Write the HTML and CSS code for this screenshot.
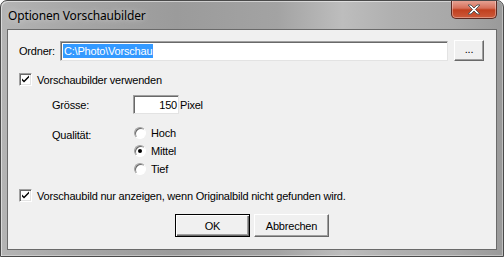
FILE: index.html
```html
<!DOCTYPE html>
<html lang="de">
<head>
<meta charset="utf-8">
<title>Optionen Vorschaubilder</title>
<link rel="stylesheet" href="styles.css">
</head>
<body>
<div class="window">
  <div class="titlebar">
    <span class="title">Optionen Vorschaubilder</span>
    <span class="close">
      <svg width="16" height="11" viewBox="0 0 16 11"><path d="M2 1h3l3 3 3-3h3l-4.5 4.5 4.5 4.5h-3l-3-3-3 3h-3l4.5-4.5z" fill="#fff" stroke="#5a5a5a" stroke-width="1"/></svg>
    </span>
  </div>
  <div class="client">
    <div class="row folder">
      <span class="label">Ordner:</span>
      <span class="field wide"><span class="sel">C:\Photo\Vorschau</span></span>
      <span class="btn small">...</span>
    </div>
    <div class="row check first">
      <span class="box"><svg width="9" height="9" viewBox="0 0 9 9"><path d="M1 3.5l2 2 5-5v2l-5 5-2-2z" fill="#000"/></svg></span>
      <span>Vorschaubilder verwenden</span>
    </div>
    <div class="row size">
      <span class="label indent">Grösse:</span>
      <span class="field num">150</span>
      <span class="unit">Pixel</span>
    </div>
    <div class="row quality">
      <span class="label indent">Qualität:</span>
      <div class="radios">
        <div class="radio"><span class="dot"></span><span>Hoch</span></div>
        <div class="radio on"><span class="dot"></span><span>Mittel</span></div>
        <div class="radio"><span class="dot"></span><span>Tief</span></div>
      </div>
    </div>
    <div class="row check second">
      <span class="box"><svg width="9" height="9" viewBox="0 0 9 9"><path d="M1 3.5l2 2 5-5v2l-5 5-2-2z" fill="#000"/></svg></span>
      <span>Vorschaubild nur anzeigen, wenn Originalbild nicht gefunden wird.</span>
    </div>
    <div class="row actions">
      <span class="btn default">OK</span>
      <span class="btn">Abbrechen</span>
    </div>
  </div>
</div>
</body>
</html>
```
FILE: styles.css
```css
* { box-sizing: border-box; }
html, body { margin: 0; padding: 0; background: #fff; }
.window {
  width: 504px;
  height: 257px;
  border: 1px solid #4a4a4a;
  border-radius: 7px 7px 0 0;
  background:
    linear-gradient(to right, #b4b4b4 0%, #a6a6a6 15%, #9b9b9b 35%, #a3a3a3 55%, #bdbdbd 68%, #b0b0b0 78%, #a8a8a8 90%, #9a9a9a 100%);
  display: flex;
  flex-direction: column;
  overflow: hidden;
  box-shadow: inset 1px 1px 0 rgba(255,255,255,0.5), inset -1px -1px 0 rgba(255,255,255,0.35);
}
.titlebar {
  height: 28px;
  display: flex;
  justify-content: space-between;
  align-items: flex-start;
  padding-left: 7px;
  padding-right: 6px;
}
.title {
  font-family: "Noto Sans", sans-serif;
  font-size: 12px;
  letter-spacing: -0.15px;
  color: #000;
  margin-top: 6px;
  text-shadow: 0 0 6px rgba(255,255,255,0.6);
}
.close {
  width: 46px;
  height: 19px;
  margin-top: -1px;
  border: 1px solid #5c2a22;
  border-top: none;
  border-radius: 0 0 5px 5px;
  background: linear-gradient(to bottom, #e8a89a 0%, #d6705a 45%, #c1401f 55%, #cc5a3a 100%);
  display: flex;
  align-items: center;
  justify-content: center;
  box-shadow: inset 0 0 0 1px rgba(255,255,255,0.35);
}
.client {
  margin: 0 6px;
  height: 221px;
  border: 1px solid #6a6a6a;
  background: #f0f0f0;
  font-family: "Liberation Sans", Arial, sans-serif;
  font-size: 11px;
  letter-spacing: -0.2px;
  color: #000;
  padding: 10px 0 0 11px;
  display: flex;
  flex-direction: column;
}
.row { display: flex; align-items: center; }
.label { width: 41px; }
.indent { margin-left: 33px; width: 81px; }
.field {
  background: #fff;
  border-top: 1px solid #a0a0a0;
  border-left: 1px solid #a0a0a0;
  border-right: 1px solid #e3e3e3;
  border-bottom: 1px solid #e3e3e3;
  box-shadow: inset 1px 1px 0 #696969;
}
.wide {
  width: 388px;
  height: 20px;
  padding: 2px 0 0 2px;
  display: flex;
  align-items: flex-start;
}
.sel {
  background: #3399ff;
  color: #fff;
  line-height: 14px;
  padding: 0 1px;
}
.btn {
  display: flex;
  align-items: center;
  justify-content: center;
  background: #f0f0f0;
  border-top: 1px solid #fff;
  border-left: 1px solid #fff;
  border-right: 1px solid #696969;
  border-bottom: 1px solid #696969;
  box-shadow: inset -1px -1px 0 #a0a0a0;
}
.small { width: 30px; height: 21px; margin-left: 6px; padding-bottom: 3px; }
.check .box {
  width: 13px;
  height: 13px;
  background: #fff;
  border-top: 1px solid #a0a0a0;
  border-left: 1px solid #a0a0a0;
  border-right: 1px solid #fff;
  border-bottom: 1px solid #fff;
  box-shadow: inset 1px 1px 0 #696969, inset -1px -1px 0 #e3e3e3;
  display: flex;
  align-items: center;
  justify-content: center;
  margin-right: 5px;
}
.first { margin-top: 12px; }
.size { margin-top: 9px; }
.num {
  width: 46px;
  height: 19px;
  text-align: right;
  padding: 2px 1px 0 0;
  line-height: 14px;
}
.unit { margin-left: 1px; }
.quality { margin-top: 12px; align-items: flex-start; }
.quality .label { margin-top: 3px; }
.radios { display: flex; flex-direction: column; gap: 5px; margin-left: 1px; }
.radio { display: flex; align-items: center; height: 13px; }
.dot {
  width: 12px;
  height: 12px;
  border-radius: 50%;
  background: #fff;
  border: 1px solid;
  border-color: #a0a0a0 #fff #fff #a0a0a0;
  box-shadow: inset 1px 1px 0 #696969;
  margin-right: 5px;
  position: relative;
}
.radio.on .dot::after {
  content: "";
  position: absolute;
  left: 3px;
  top: 3px;
  width: 4px;
  height: 4px;
  border-radius: 50%;
  background: #000;
}
.second { margin-top: 14px; }
.actions { margin-top: 12px; justify-content: center; gap: 4px; padding-right: 11px; }
.actions .btn { width: 75px; height: 23px; }
.default { border: 1px solid #000; box-shadow: inset 1px 1px 0 #fff, inset -1px -1px 0 #696969, inset -2px -2px 0 #a0a0a0; }
```
